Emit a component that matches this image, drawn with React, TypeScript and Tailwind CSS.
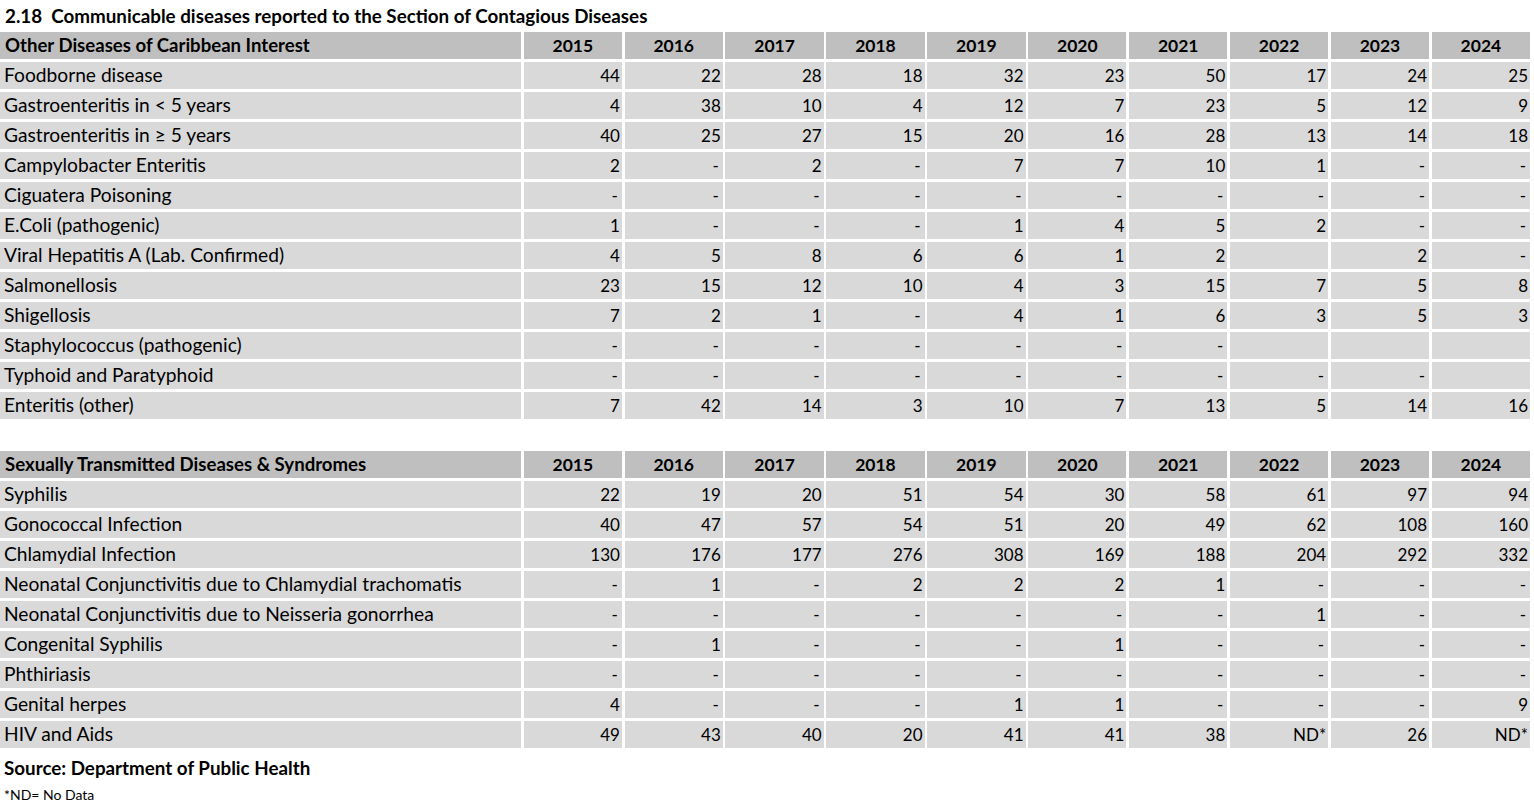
const years = ["2015", "2016", "2017", "2018", "2019", "2020", "2021", "2022", "2023", "2024"];

type Row = [string, string[]];

const caribbean: Row[] = [
  ["Foodborne disease", ["44", "22", "28", "18", "32", "23", "50", "17", "24", "25"]],
  ["Gastroenteritis in < 5 years", ["4", "38", "10", "4", "12", "7", "23", "5", "12", "9"]],
  ["Gastroenteritis in ≥ 5 years", ["40", "25", "27", "15", "20", "16", "28", "13", "14", "18"]],
  ["Campylobacter Enteritis", ["2", "-", "2", "-", "7", "7", "10", "1", "-", "-"]],
  ["Ciguatera Poisoning", ["-", "-", "-", "-", "-", "-", "-", "-", "-", "-"]],
  ["E.Coli (pathogenic)", ["1", "-", "-", "-", "1", "4", "5", "2", "-", "-"]],
  ["Viral Hepatitis A (Lab. Confirmed)", ["4", "5", "8", "6", "6", "1", "2", "", "2", "-"]],
  ["Salmonellosis", ["23", "15", "12", "10", "4", "3", "15", "7", "5", "8"]],
  ["Shigellosis", ["7", "2", "1", "-", "4", "1", "6", "3", "5", "3"]],
  ["Staphylococcus (pathogenic)", ["-", "-", "-", "-", "-", "-", "-", "", "", ""]],
  ["Typhoid and Paratyphoid", ["-", "-", "-", "-", "-", "-", "-", "-", "-", ""]],
  ["Enteritis (other)", ["7", "42", "14", "3", "10", "7", "13", "5", "14", "16"]],
];

const std: Row[] = [
  ["Syphilis", ["22", "19", "20", "51", "54", "30", "58", "61", "97", "94"]],
  ["Gonococcal Infection", ["40", "47", "57", "54", "51", "20", "49", "62", "108", "160"]],
  ["Chlamydial Infection", ["130", "176", "177", "276", "308", "169", "188", "204", "292", "332"]],
  ["Neonatal Conjunctivitis due to Chlamydial trachomatis", ["-", "1", "-", "2", "2", "2", "1", "-", "-", "-"]],
  ["Neonatal Conjunctivitis due to Neisseria gonorrhea", ["-", "-", "-", "-", "-", "-", "-", "1", "-", "-"]],
  ["Congenital Syphilis", ["-", "1", "-", "-", "-", "1", "-", "-", "-", "-"]],
  ["Phthiriasis", ["-", "-", "-", "-", "-", "-", "-", "-", "-", "-"]],
  ["Genital herpes", ["4", "-", "-", "-", "1", "1", "-", "-", "-", "9"]],
  ["HIV and Aids", ["49", "43", "40", "20", "41", "41", "38", "ND*", "26", "ND*"]],
];

function StatTable({ title, rows }: { title: string; rows: Row[] }) {
  return (
    <div className="grid w-[1530px] grid-cols-[521px_repeat(10,1fr)] gap-[2.7px]">
      <div className="flex h-[27.3px] items-center bg-[#bfbfbf] pl-[5px] text-[18.6px] font-bold">{title}</div>
      {years.map((y) => (
        <div key={y} className="flex h-[27.3px] items-center justify-center bg-[#bfbfbf] text-[17.5px] font-bold">
          {y}
        </div>
      ))}
      {rows.map(([label, vals]) => (
        <>
          <div key={label} className="flex h-[27.3px] items-center bg-[#d9d9d9] pb-[1px] pl-[4px] text-[19.2px]">
            {label}
          </div>
          {vals.map((v, i) => (
            <div
              key={label + i}
              className={`flex h-[27.3px] items-center justify-end bg-[#d9d9d9] pt-[1px] text-[17px] ${v === "-" ? "pr-[4px]" : "pr-[2px]"}`}
            >
              {v}
            </div>
          ))}
        </>
      ))}
    </div>
  );
}

export default function App() {
  return (
    <div className="h-[812px] w-[1534px] bg-white text-black font-['Lato','Liberation_Sans',sans-serif] leading-none">
      <div className="flex h-[31.7px] items-center pl-[5px] pt-[2px] text-[18.8px] font-bold">
        2.18&nbsp;&nbsp;Communicable diseases reported to the Section of Contagious Diseases
      </div>
      <StatTable title="Other Diseases of Caribbean Interest" rows={caribbean} />
      <div className="h-[32px]" />
      <StatTable title="Sexually Transmitted Diseases & Syndromes" rows={std} />
      <div className="flex h-[38px] items-center pl-[4px] pt-[2px] text-[18.8px] font-bold">
        Source: Department of Public Health
      </div>
      <div className="pl-[4px] pt-[2px] text-[14px]">*ND= No Data</div>
    </div>
  );
}
